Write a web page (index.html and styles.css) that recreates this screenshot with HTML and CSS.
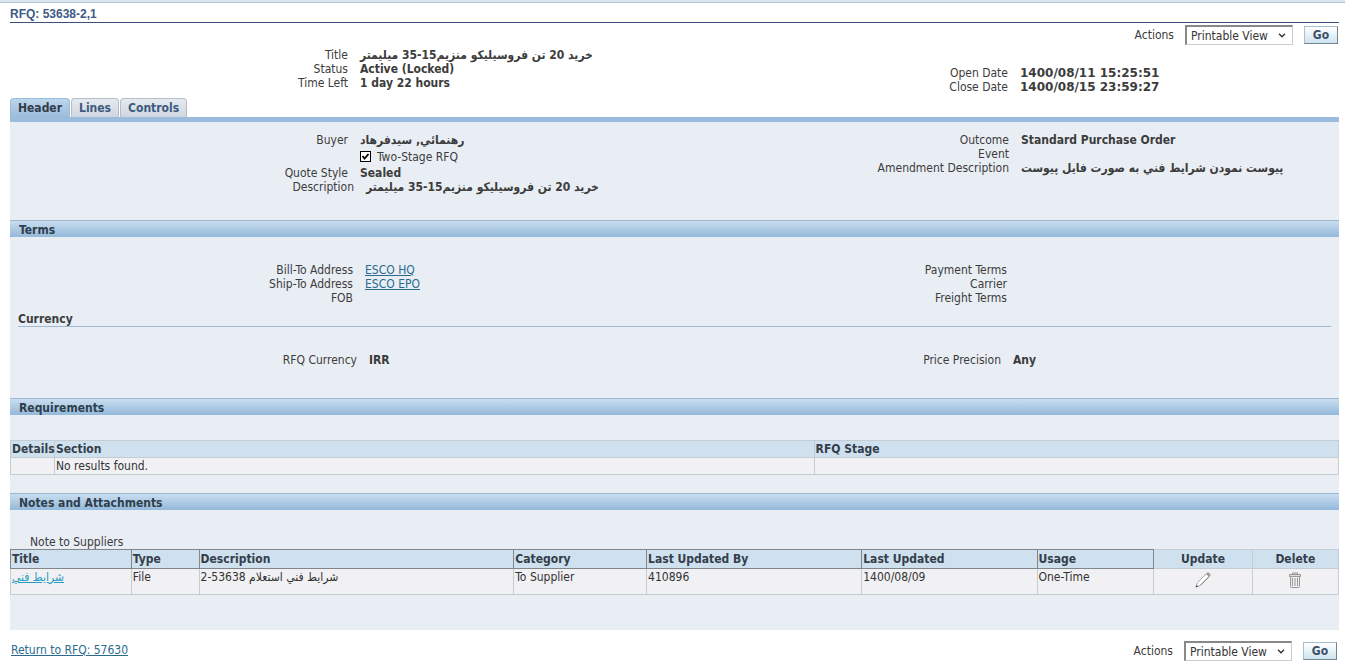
FILE: index.html
```html
<!DOCTYPE html>
<html lang="en">
<head>
<meta charset="utf-8">
<title>RFQ: 53638-2,1</title>
<link rel="stylesheet" href="styles.css">
</head>
<body>
<div class="topstrip"></div>
<main class="page">
  <h1 class="title">RFQ: 53638-2,1</h1>
  <form class="actions">
    <label for="act1">Actions</label>
    <span class="select"><select id="act1"><option>Printable View</option></select>
      <svg viewBox="0 0 8 5" aria-hidden="true"><path d="M1 .8 4 3.8 7 .8"/></svg></span>
    <button type="button" class="go">Go</button>
  </form>
  <div class="form summary">
    <dl>
      <dt>Title</dt><dd>خريد 20 تن فروسيليكو منزيم15-35 ميليمتر</dd>
      <dt>Status</dt><dd>Active (Locked)</dd>
      <dt>Time Left</dt><dd>1 day 22 hours</dd>
    </dl>
    <dl class="dates">
      <dt>Open Date</dt><dd>1400/08/11 15:25:51</dd>
      <dt>Close Date</dt><dd>1400/08/15 23:59:27</dd>
    </dl>
  </div>
  <nav class="tabs">
    <a class="tab current" href="#header">Header</a>
    <a class="tab" href="#lines">Lines</a>
    <a class="tab" href="#controls">Controls</a>
  </nav>
  <div class="panel" id="header">
    <div class="form general">
      <div class="side">
        <dl>
          <dt>Buyer</dt><dd>رهنمائي, سيدفرهاد</dd>
          <dt></dt><dd class="check"><span class="box"><input type="checkbox" id="two" checked><svg viewBox="0 0 11 11" aria-hidden="true"><path d="M2.500 5 4.500 7.500 8.500 3"/></svg></span><label for="two">Two-Stage RFQ</label></dd>
          <dt>Quote Style</dt><dd>Sealed</dd>
        </dl>
        <dl class="wide">
          <dt>Description</dt><dd>خريد 20 تن فروسيليكو منزيم15-35 ميليمتر</dd>
        </dl>
      </div>
      <dl>
        <dt>Outcome</dt><dd>Standard Purchase Order</dd>
        <dt>Event</dt><dd></dd>
        <dt>Amendment Description</dt><dd>پيوست نمودن شرايط فني به صورت فايل پيوست</dd>
      </dl>
    </div>

    <h2 class="bar">Terms</h2>
    <div class="form terms">
      <dl>
        <dt>Bill-To Address</dt><dd><a href="#hq">ESCO HQ</a></dd>
        <dt>Ship-To Address</dt><dd><a href="#epo">ESCO EPO</a></dd>
        <dt>FOB</dt><dd></dd>
      </dl>
      <dl>
        <dt>Payment Terms</dt><dd></dd>
        <dt>Carrier</dt><dd></dd>
        <dt>Freight Terms</dt><dd></dd>
      </dl>
    </div>
    <h3 class="sub">Currency</h3>
    <div class="form currency">
      <dl><dt>RFQ Currency</dt><dd>IRR</dd></dl>
      <dl><dt>Price Precision</dt><dd>Any</dd></dl>
    </div>

    <h2 class="bar">Requirements</h2>
    <table class="grid reqs">
      <colgroup><col class="c-det"><col class="c-sec"><col></colgroup>
      <thead><tr><th>Details</th><th>Section</th><th>RFQ Stage</th></tr></thead>
      <tbody><tr><td></td><td>No results found.</td><td></td></tr></tbody>
    </table>

    <h2 class="bar">Notes and Attachments</h2>
    <p class="note">Note to Suppliers</p>
    <table class="grid files">
      <colgroup><col class="c1"><col class="c2"><col class="c3"><col class="c4"><col class="c5"><col class="c6"><col class="c7"><col class="c8"><col></colgroup>
      <thead><tr>
        <th class="sort">Title</th><th class="sort">Type</th><th class="sort">Description</th><th class="sort">Category</th><th class="sort">Last Updated By</th><th class="sort">Last Updated</th><th class="sort">Usage</th><th class="mid">Update</th><th class="mid">Delete</th>
      </tr></thead>
      <tbody><tr>
        <td><a class="bright" href="#file">شرايط فني</a></td><td>File</td><td>شرايط فني استعلام 53638-2</td><td>To Supplier</td><td>410896</td><td>1400/08/09</td><td>One-Time</td>
        <td class="mid"><button type="button" class="icon" aria-label="Update"><svg width="18" height="18" viewBox="0 0 18 18"><path d="M2 16 3.500 11.500 12.500 2.500Q14 1 15.500 2.500T15.500 5.500L6.500 14.500Z" fill="#fff" stroke="#aaa"/><path d="M12 3 15 6 16 4.500Q16 2 14 1.800Z" fill="#999"/><path d="M6 14.500 15 5.500" stroke="#888" fill="none"/><path d="M1.500 16.500 2.500 14 4.200 15.600Z" fill="#444"/></svg></button></td>
        <td class="mid"><button type="button" class="icon" aria-label="Delete"><svg width="18" height="18" viewBox="0 0 18 18"><path d="M4.500 5.500h9v10q0 1-1 1h-7q-1 0-1-1z" fill="#eee" stroke="#999"/><path d="M3.500 3.500h11v2h-11zM6.500 3.500v-1.500h5v1.500" fill="#ddd" stroke="#999"/><path d="M6.500 7v8M9 7v8M11.500 7v8" stroke="#999" fill="none"/></svg></button></td>
      </tr></tbody>
    </table>
  </div>
  <footer class="foot">
    <a href="#rfq">Return to RFQ: 57630</a>
    <form class="actions">
      <label for="act2">Actions</label>
      <span class="select"><select id="act2"><option>Printable View</option></select>
        <svg viewBox="0 0 8 5" aria-hidden="true"><path d="M1 .8 4 3.8 7 .8"/></svg></span>
      <button type="button" class="go">Go</button>
    </form>
  </footer>
</main>
</body>
</html>
```
FILE: styles.css
```css
* { box-sizing: border-box; }
body {
  margin: 0;
  background: #fff;
  color: #3c3c3c;
  font: 12px/14px "DejaVu Sans Condensed", "DejaVu Sans", sans-serif;
}
a { color: #2a6a8f; }
.topstrip {
  height: 3px;
  background: #d9e4f0;
  border-bottom: 1px solid #b4c8dc;
}
.page { padding: 0 6px 0 10px; }
.title {
  margin: 0;
  padding: 4px 0 1px;
  border-bottom: 1px solid #3c5080;
  color: #3d5a88;
  font: bold 12px/14px "Liberation Sans", Arial, sans-serif;
}
.actions {
  display: flex;
  justify-content: flex-end;
  align-items: center;
  gap: 11px;
  padding: 2px 1px 0 0;
}
.select { position: relative; display: flex; }
.select select {
  appearance: none;
  width: 108px;
  height: 20px;
  padding: 0 20px 0 4px;
  border: 1px solid #ccc;
  border-top: 2px solid #888;
  border-left: 2px solid #888;
  border-radius: 0;
  background: #fff;
  color: #333;
  font: inherit;
}
.select svg {
  position: absolute;
  right: 7px;
  top: 8px;
  width: 8px;
  height: 5px;
  fill: none;
  stroke: #333;
  stroke-width: 1.4;
  pointer-events: none;
}
.go {
  width: 34px;
  height: 18px;
  padding: 0;
  border: 1px solid #a9bfd0;
  border-right-color: #6f8494;
  border-bottom-color: #6f8494;
  background: linear-gradient(#fff, #cfe3f0);
  color: #3d5068;
  font: inherit;
  font-weight: bold;
}
.form {
  --left: 338fr 412fr;
  --right: 236fr 319fr;
  display: grid;
  grid-template-columns: 762fr 567fr;
}
dl {
  display: grid;
  grid-template-columns: var(--left);
  column-gap: 12px;
  grid-auto-rows: minmax(14px, auto);
  align-content: start;
  margin: 0;
}
.form > dl:last-child { grid-template-columns: var(--right); }
dt { text-align: right; }
dd { margin: 0; font-weight: bold; white-space: nowrap; }
dd a { font-weight: normal; }
.summary { padding: 3px 0 4px; min-height: 53px; }
.dates { padding-top: 18px; }
.dates dd { font-family: "DejaVu Sans", sans-serif; }
.tabs {
  display: flex;
  gap: 1px;
  border-bottom: 5px solid #9bbcdc;
}
.tab {
  height: 19px;
  padding: 3px 7px 0;
  border: 1px solid #b5bfca;
  border-bottom: 0;
  border-radius: 4px 4px 0 0;
  background: linear-gradient(#e6eaf0, #cfd6df);
  color: #3d5a80;
  font-weight: bold;
  line-height: 13px;
  text-decoration: none;
}
.tab.current {
  border-color: #9bbcdc;
  background: linear-gradient(#bcd6ec, #9bbcdc);
  color: #333c48;
}
.panel { padding-bottom: 35px; background: #e9eef5; }
.general { --right: 237fr 318fr; min-height: 98px; padding-top: 11px; }
dl.wide { grid-template-columns: 344fr 406fr; }
.check { display: flex; align-items: center; gap: 6px; height: 19px; font-weight: normal; }
.box { position: relative; display: flex; }
.box input {
  appearance: none;
  width: 11px;
  height: 11px;
  margin: 0;
  border: 1px solid #000;
  background: #fff;
}
.box svg {
  position: absolute;
  inset: 0;
  fill: none;
  stroke: #000;
  stroke-width: 1.8;
  pointer-events: none;
  visibility: hidden;
}
.box input:checked + svg { visibility: visible; }
.bar {
  margin: 0;
  height: 17px;
  padding: 1px 9px 0;
  border-top: 1px solid #9cb8d0;
  background: linear-gradient(#c9ddf0, #94b9da);
  color: #2f3e4c;
  font: inherit;
  font-weight: bold;
  line-height: 16px;
}
.terms { --left: 343fr 407fr; --right: 235fr 320fr; padding-top: 26px; }
.sub {
  margin: 7px 8px 0;
  border-bottom: 1px solid #a0b8d0;
  font: inherit;
  font-weight: bold;
}
.currency { --left: 347fr 403fr; --right: 229fr 326fr; padding: 26px 0 31px; }
.grid { width: 100%; border-collapse: collapse; table-layout: fixed; }
.grid th, .grid td {
  padding: 1px;
  border: 1px solid #c4ccd4;
  text-align: left;
  vertical-align: top;
  white-space: nowrap;
}
.grid th { background: #cfe0ef; color: #333e4a; }
.grid td { background: #f1f1f4; color: #333; }
.reqs { margin: 25px 0 18px; }
.reqs tr { height: 17px; }
.c-det { width: 44px; }
.c-sec { width: 57.2%; }
.note { margin: 0; padding: 26px 20px 0; line-height: 13px; }
.files th.sort { padding: 2px 1px; border: 1px solid #7f868c; }
.files td { height: 26px; }
.grid .mid { text-align: center; padding: 2px 1px; }
.c1 { width: 9.1%; }
.c2 { width: 5.1%; }
.c3 { width: 23.7%; }
.c4 { width: 10%; }
.c5 { width: 16.2%; }
.c6 { width: 13.2%; }
.c7 { width: 8.8%; }
.c8 { width: 7.4%; }
.bright { color: #2a9cc4; }
.icon { padding: 0; border: 0; background: none; height: 18px; }
.icon svg { display: block; }
.foot {
  display: flex;
  justify-content: space-between;
  align-items: center;
  padding: 9px 1px;
}
```
